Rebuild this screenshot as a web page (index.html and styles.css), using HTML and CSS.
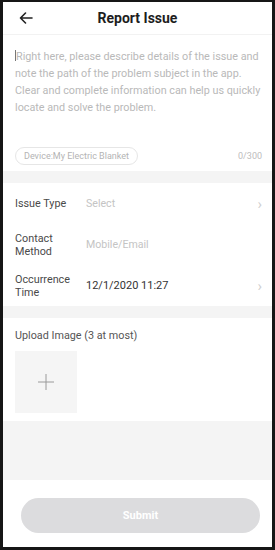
FILE: index.html
```html
<!DOCTYPE html>
<html lang="en">
<head>
  <meta charset="UTF-8" />
  <meta name="viewport" content="width=device-width, initial-scale=1.0"/>
  <title>Report Issue</title>
  <link rel="stylesheet" href="styles.css">
</head>
<body>
  <div class="frame">

    <div class="header">
      <svg class="back" width="14" height="12" viewBox="0 0 14 12">
        <path d="M13 6H1.5M6.5 1L1.5 6l5 5" fill="none" stroke="#222" stroke-width="1.6" stroke-linecap="round" stroke-linejoin="round"/>
      </svg>
      <h2>Report Issue</h2>
    </div>

    <div class="describe">
      <p class="placeholder"><span class="caret"></span>Right here, please describe details of the issue and note the path of the problem subject in the app. Clear and complete information can help us quickly locate and solve the problem.</p>
      <div class="describe-foot">
        <span class="chip">Device:My Electric Blanket</span>
        <span class="count">0/300</span>
      </div>
    </div>

    <div class="band"></div>

    <div class="row">
      <span class="label">Issue Type</span>
      <span class="value muted">Select</span>
      <span class="chev">&#8250;</span>
    </div>
    <div class="row">
      <span class="label">Contact<br>Method</span>
      <span class="value muted">Mobile/Email</span>
    </div>
    <div class="row">
      <span class="label">Occurrence<br>Time</span>
      <span class="value">12/1/2020 11:27</span>
      <span class="chev">&#8250;</span>
    </div>

    <div class="band"></div>

    <div class="upload">
      <div class="upload-title">Upload Image (3 at most)</div>
      <div class="upload-box">
        <svg width="16" height="16" viewBox="0 0 16 16">
          <path d="M8 0v16M0 8h16" stroke="#9a9a9a" stroke-width="1"/>
        </svg>
      </div>
    </div>

    <div class="band tall"></div>

    <div class="footer">
      <button class="submit">Submit</button>
    </div>

  </div>
</body>
</html>
```

FILE: styles.css
```css
* {
  box-sizing: border-box;
}

body {
  margin: 0;
  font-family: Roboto, "Liberation Sans", Arial, sans-serif;
  background: #fff;
}

.frame {
  width: 275px;
  height: 550px;
  border: 3px solid #161616;
  border-top-width: 2px;
  display: flex;
  flex-direction: column;
  overflow: hidden;
}

.header {
  height: 33px;
  display: flex;
  align-items: center;
  justify-content: center;
  position: relative;
  border-bottom: 1px solid #f2f2f2;
}

.back {
  position: absolute;
  left: 16px;
  top: 10px;
}

h2 {
  margin: 0;
  font-size: 14px;
  font-weight: bold;
  color: #1e1e1e;
}

.describe {
  padding: 13px 6px 0 12px;
  height: 136px;
  display: flex;
  flex-direction: column;
}

.placeholder {
  margin: 0;
  font-size: 10.8px;
  line-height: 17px;
  color: #b9b9b9;
  flex: 1;
}

.caret {
  display: inline-block;
  width: 1px;
  height: 11px;
  background: #777;
  vertical-align: -1px;
}

.describe-foot {
  display: flex;
  justify-content: space-between;
  align-items: center;
  padding: 0 4px 6px 0;
}

.chip {
  font-size: 9px;
  color: #b4b4b4;
  border: 1px solid #e6e6e6;
  border-radius: 10px;
  padding: 3px 8px;
}

.count {
  font-size: 9px;
  color: #bdbdbd;
}

.band {
  height: 12px;
  background: #f4f4f4;
}

.band.tall {
  height: 59px;
}

.row {
  height: 41px;
  display: flex;
  align-items: center;
  padding: 0 10px 0 12px;
}

.label {
  width: 71px;
  font-size: 10.8px;
  line-height: 13px;
  color: #4a4a4a;
}

.value {
  flex: 1;
  font-size: 11px;
  color: #333;
}

.value.muted {
  color: #c4c4c4;
  font-size: 10.6px;
}

.chev {
  font-size: 15px;
  color: #d0d0d0;
}

.upload {
  padding: 11px 12px 6px;
  height: 103px;
}

.upload-title {
  font-size: 10.8px;
  color: #555;
}

.upload-box {
  width: 62px;
  height: 62px;
  margin-top: 9px;
  background: #f5f5f5;
  display: flex;
  align-items: center;
  justify-content: center;
}

.footer {
  flex: 1;
  padding: 18px 12px 0 18px;
}

.submit {
  width: 100%;
  height: 35px;
  border: none;
  border-radius: 18px;
  background: #dcdcde;
  color: #fff;
  font-family: inherit;
  font-size: 11px;
  font-weight: bold;
}
```
